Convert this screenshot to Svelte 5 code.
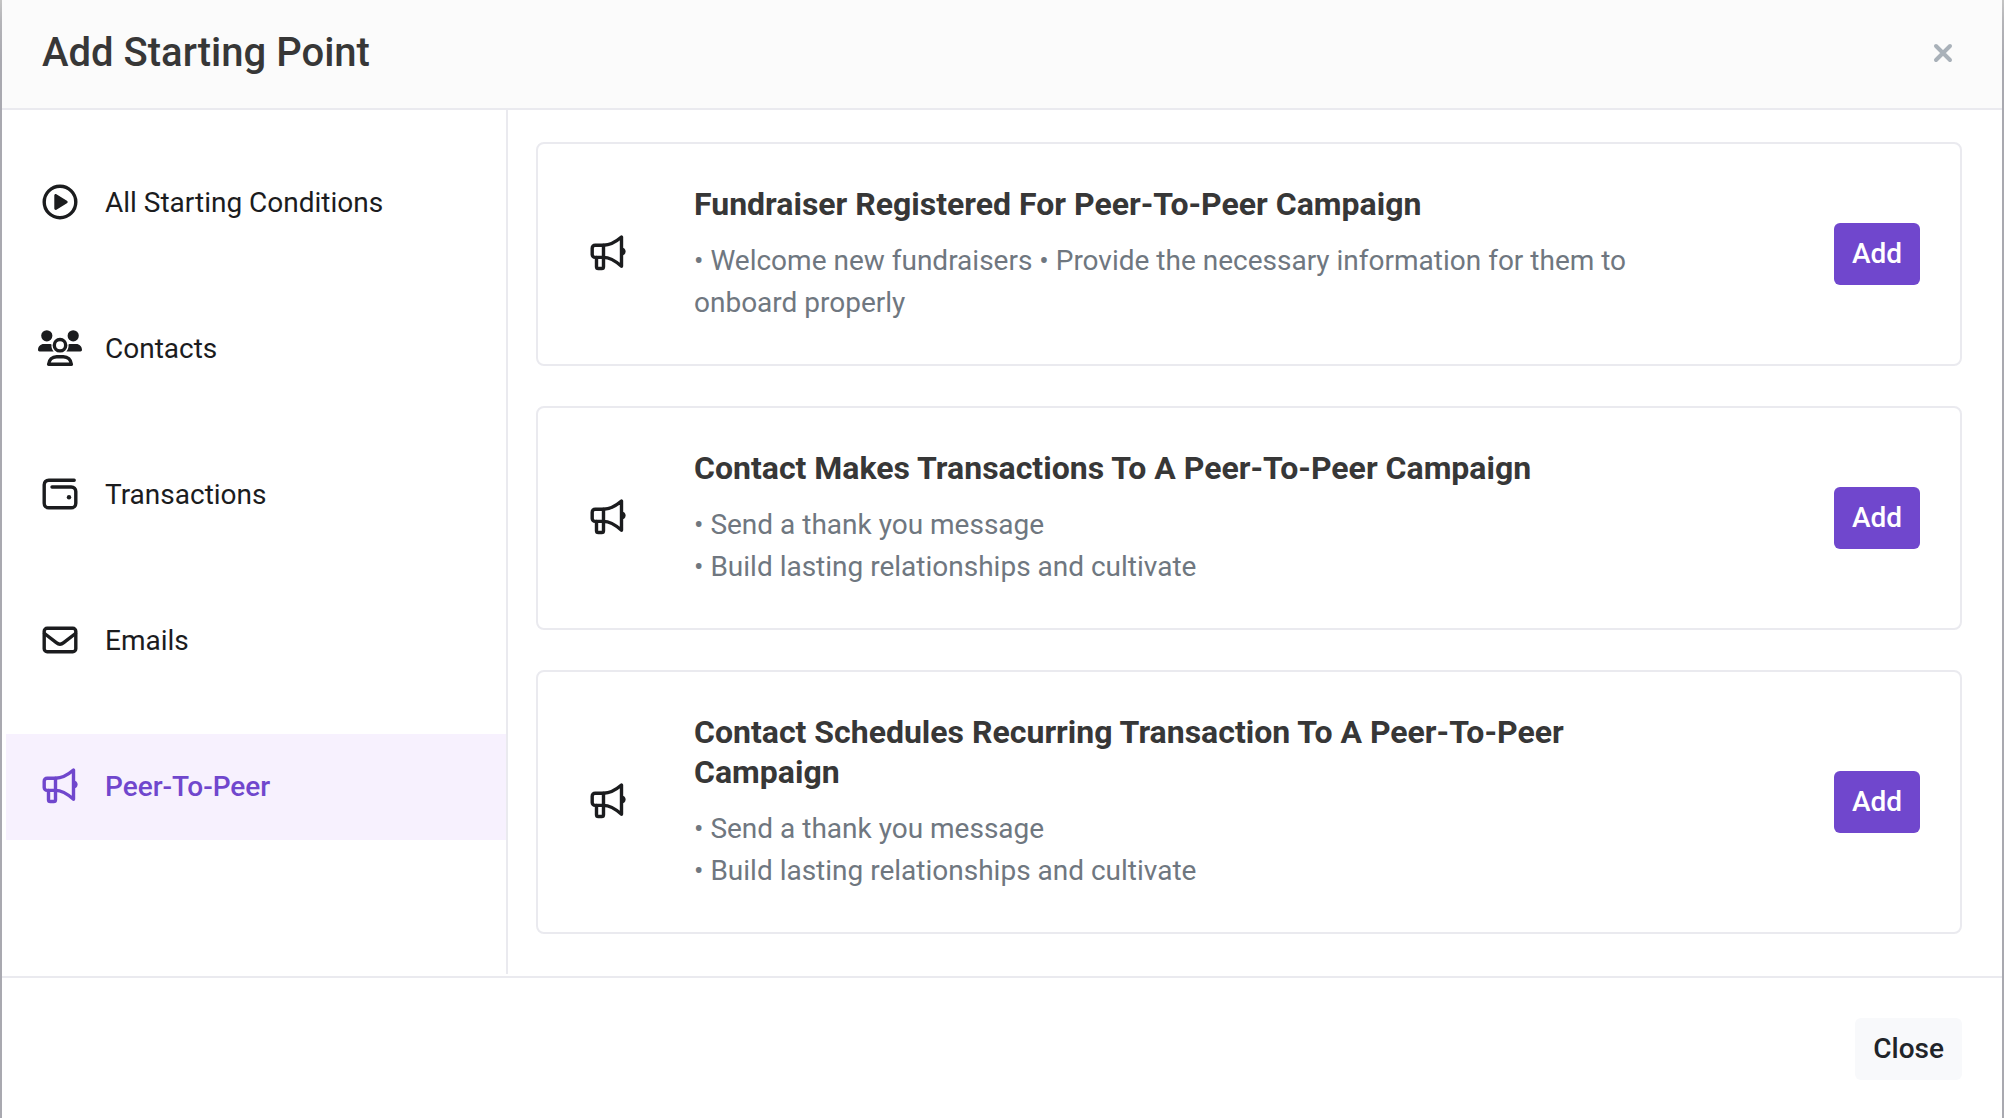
<script lang="ts">
  type IconName = 'play' | 'contacts' | 'wallet' | 'mail' | 'megaphone'

  interface Category {
    id: string
    label: string
    icon: IconName
  }

  interface StartingPoint {
    title: string
    description: string
  }

  const categories: Category[] = [
    { id: 'all', label: 'All Starting Conditions', icon: 'play' },
    { id: 'contacts', label: 'Contacts', icon: 'contacts' },
    { id: 'transactions', label: 'Transactions', icon: 'wallet' },
    { id: 'emails', label: 'Emails', icon: 'mail' },
    { id: 'p2p', label: 'Peer-To-Peer', icon: 'megaphone' },
  ]

  const startingPoints: StartingPoint[] = [
    {
      title: 'Fundraiser Registered For Peer-To-Peer Campaign',
      description:
        '• Welcome new fundraisers • Provide the necessary information for them to onboard properly',
    },
    {
      title: 'Contact Makes Transactions To A Peer-To-Peer Campaign',
      description: '• Send a thank you message\n• Build lasting relationships and cultivate',
    },
    {
      title: 'Contact Schedules Recurring Transaction To A Peer-To-Peer Campaign',
      description: '• Send a thank you message\n• Build lasting relationships and cultivate',
    },
  ]

  let active = $state('p2p')
</script>

{#snippet icon(name: IconName)}
  <svg class="icon" viewBox="0 1 44 36" aria-hidden="true">
    {#if name === 'play'}
      <circle cx="22" cy="18" r="15.8" />
      <path class="solid" d="M16.3 11.6c0-1.2 1.1-1.8 2.1-1.3l10.5 6.4c1 .6 1 2 0 2.6l-10.5 6.4c-1 .5-2.1-.1-2.1-1.3z" />
    {:else if name === 'contacts'}
      <circle class="solid" cx="8.8" cy="5.8" r="5.6" />
      <circle class="solid" cx="35.2" cy="5.8" r="5.6" />
      <path class="solid" d="M5.8 14h5.6c.8 0 1.5.1 2.1.4-.3 2.6.4 5.1 2.2 7H1.5C.7 21.4 0 20.7 0 19.8 0 16.6 2.6 14 5.8 14z" />
      <path class="solid" d="M38.2 14h-5.6c-.8 0-1.5.1-2.1.4.3 2.6-.4 5.1-2.2 7h14.2c.8 0 1.5-.7 1.5-1.6 0-3.2-2.6-5.8-5.8-5.8z" />
      <circle cx="22" cy="15.2" r="5.7" />
      <path d="M18.6 26.7h6.8c4.3 0 7.6 3 8 7.6H10.6c.4-4.6 3.7-7.6 8-7.6z" />
    {:else if name === 'wallet'}
      <path d="M36.2 4.2H10.8c-2.8 0-4.6 1.9-4.6 4.6v18.4c0 2.7 1.9 4.6 4.6 4.6h22.4c2.7 0 4.6-1.9 4.6-4.6V15.6c0-2.7-1.9-4.6-4.6-4.6H14" />
      <circle class="solid" cx="31" cy="21.3" r="2.2" />
    {:else if name === 'mail'}
      <rect x="6.2" y="6.2" width="31.6" height="23.6" rx="3" />
      <path d="M6.5 11.5l11.8 9.2c2.500 2 4.900 2 7.400 0l11.800-9.200" />
    {:else}
      <path d="M17.500 10.200H9.200c-1.700 0-3 1.300-3 3v6.200c0 1.700 1.300 3 3 3h8.300z" />
      <path d="M17.5 10.2c6.5 0 11.5-2.6 18-8.2v29.2c-6.5-5.6-11.5-8.8-18-8.8" />
      <path d="M10.5 22.5v9.2c0 1 .8 1.8 1.8 1.8h3.4c1 0 1.8-.8 1.8-1.8v-9.2" />
      <path class="solid" d="M36 12.8c2.2 0 3.6 1.7 3.6 3.8S38.2 20.4 36 20.4z" />
    {/if}
  </svg>
{/snippet}

<div class="backdrop">
  <div class="modal" role="dialog" aria-labelledby="modal-title">
    <header class="modal-header">
      <h1 id="modal-title">Add Starting Point</h1>
      <button class="dismiss" type="button" aria-label="Dismiss">
        <svg viewBox="0 0 20 20" aria-hidden="true">
          <path d="M3 3l14 14M17 3L3 17" />
        </svg>
      </button>
    </header>

    <div class="modal-body">
      <nav class="sidebar">
        {#each categories as category (category.id)}
          <button
            class="nav-item"
            class:active={active === category.id}
            type="button"
            onclick={() => (active = category.id)}
          >
            {@render icon(category.icon)}
            <span>{category.label}</span>
          </button>
        {/each}
      </nav>

      <main class="list">
        {#each startingPoints as point (point.title)}
          <article class="card">
            {@render icon('megaphone')}
            <div class="card-text">
              <h2>{point.title}</h2>
              <p>{point.description}</p>
            </div>
            <button class="btn primary" type="button">Add</button>
          </article>
        {/each}
      </main>
    </div>

    <footer class="modal-footer">
      <button class="btn light" type="button">Close</button>
    </footer>
  </div>
</div>

<style>
  :global(body) {
    margin: 0;
    background: #a9a9b0;
  }

  .backdrop {
    min-height: 100vh;
    display: flex;
    padding: 0 2px;
    box-sizing: border-box;
    background: linear-gradient(#c4c4c4, #b4b4b8 22px, #a9a9b0 60px);
    font-family: Roboto, 'Liberation Sans', sans-serif;
    font-size: 28px;
    line-height: 42px;
    color: #1b1c1e;
  }

  .modal {
    flex: 1;
    display: flex;
    flex-direction: column;
    background: #fff;
  }

  .modal-header {
    display: flex;
    align-items: center;
    justify-content: space-between;
    padding: 23px 40px 25px;
    background: #fbfbfb;
    border-bottom: 2px solid #eaeaef;
  }

  h1 {
    margin: 0;
    font-size: 40px;
    line-height: 60px;
    font-weight: 500;
    color: #373737;
  }

  .dismiss {
    display: flex;
    padding: 8px 9px;
    border: 0;
    background: transparent;
    cursor: pointer;
  }

  .dismiss svg {
    width: 20px;
    height: 20px;
    fill: none;
    stroke: #a9b1b9;
    stroke-width: 4;
    stroke-linecap: round;
  }

  .modal-body {
    display: flex;
    padding-bottom: 2px;
  }

  .sidebar {
    flex: 0 0 506px;
    box-sizing: border-box;
    display: flex;
    flex-direction: column;
    gap: 40px;
    padding: 40px 0 40px 4px;
    border-right: 2px solid #eaeaef;
  }

  .nav-item {
    display: flex;
    align-items: center;
    gap: 23px;
    padding: 32px;
    border: 0;
    background: transparent;
    font: inherit;
    color: inherit;
    text-align: left;
    cursor: pointer;
  }

  .nav-item.active {
    background: #f7f1fe;
    color: #7047cd;
    font-weight: 500;
  }

  .icon {
    flex: none;
    width: 44px;
    height: 36px;
    overflow: visible;
    fill: none;
    stroke: currentColor;
    stroke-width: 3.4;
    stroke-linecap: round;
    stroke-linejoin: round;
  }

  .icon .solid {
    fill: currentColor;
    stroke: none;
  }

  .list {
    flex: 1;
    min-width: 0;
    display: flex;
    flex-direction: column;
    gap: 40px;
    padding: 32px 40px 40px 28px;
  }

  .card {
    display: flex;
    align-items: center;
    padding: 40px 40px 40px 48px;
    border: 2px solid #eaeaef;
    border-radius: 8px;
  }

  .card-text {
    flex: 1;
    margin: 0 164px 0 64px;
  }

  h2 {
    margin: 0 0 16px;
    font-size: 32px;
    line-height: 40px;
    font-weight: 700;
    color: #373737;
  }

  p {
    margin: 0;
    color: #6f7780;
    white-space: pre-line;
  }

  .btn {
    padding: 10px 18px;
    border: 0;
    border-radius: 6px;
    font: inherit;
    font-weight: 500;
    cursor: pointer;
  }

  .btn.primary {
    background: #7047cd;
    color: #fff;
  }

  .btn.light {
    background: #f8f9fb;
    color: #212429;
  }

  .modal-footer {
    display: flex;
    justify-content: flex-end;
    padding: 40px 40px 38px;
    border-top: 2px solid #eaeaef;
  }
</style>
